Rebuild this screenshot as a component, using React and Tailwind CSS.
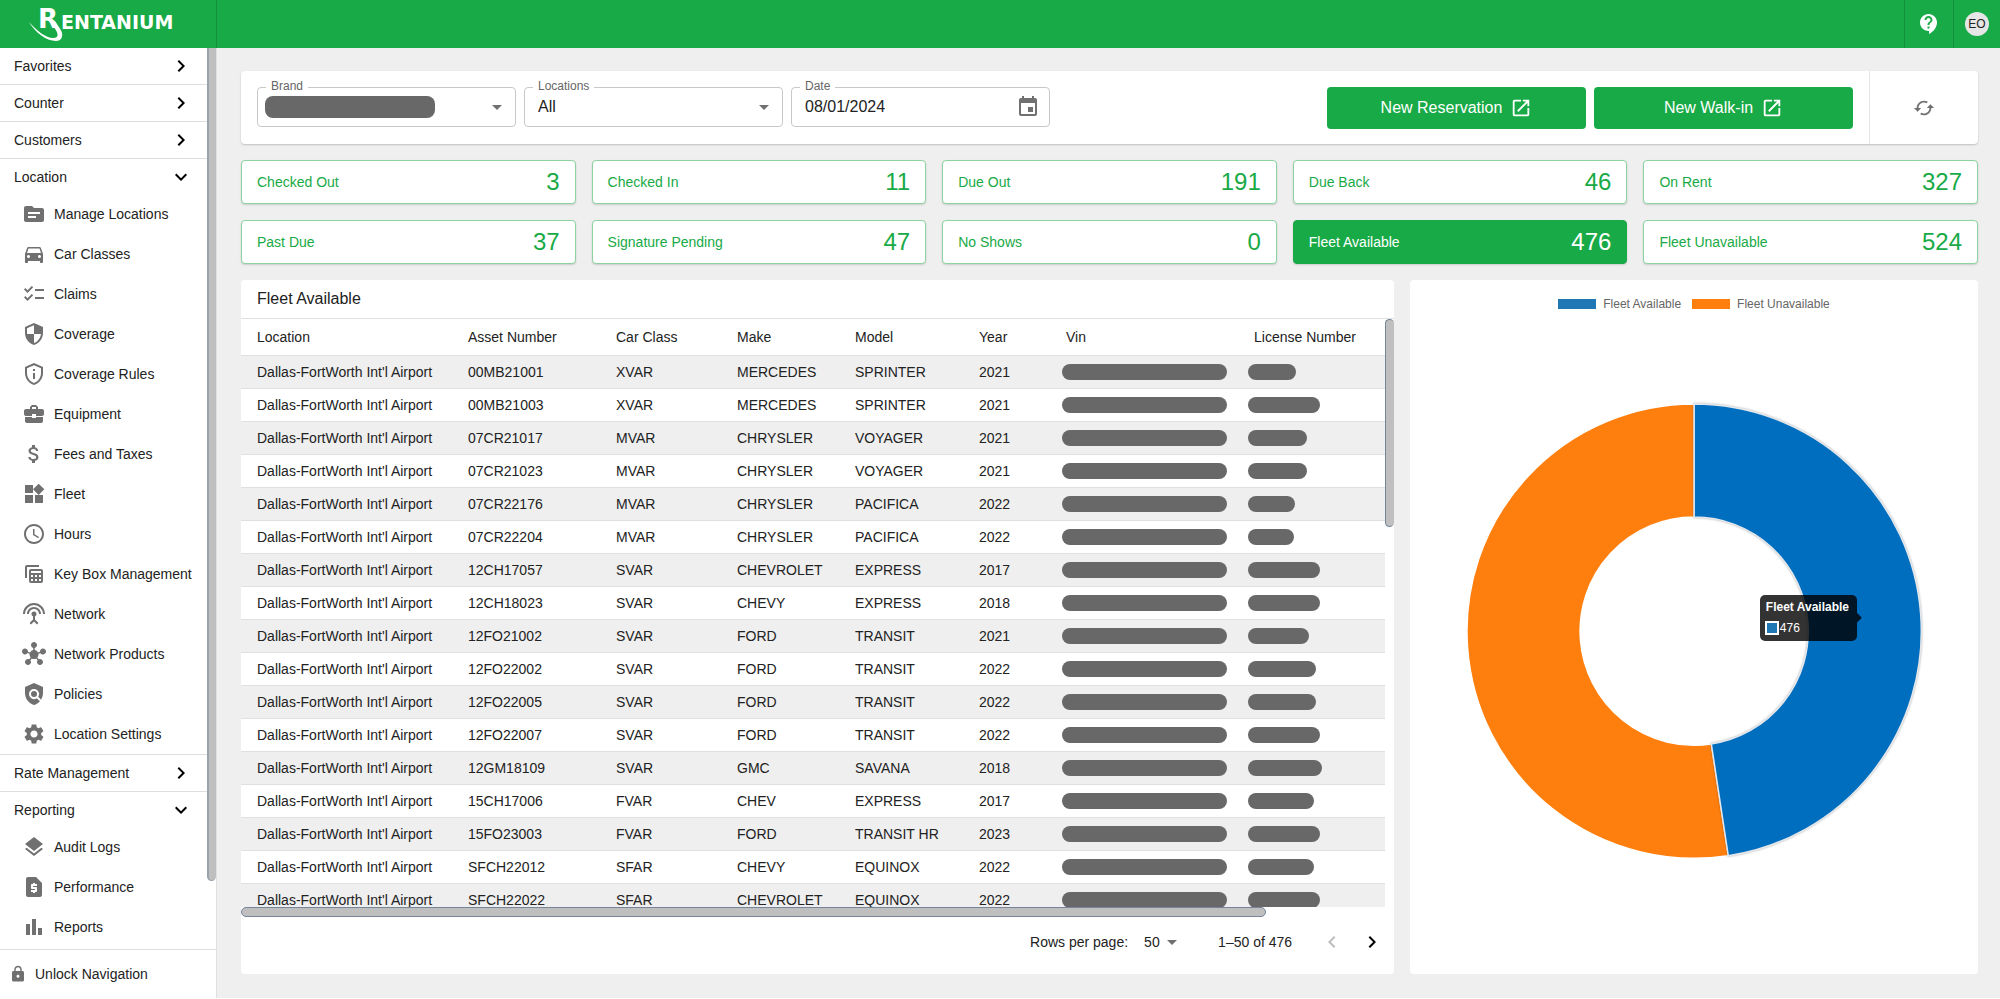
import React from "react";
import {
  MdArrowDropDown,
  MdAttachMoney,
  MdBusinessCenter,
  MdCached,
  MdChecklist,
  MdChevronLeft,
  MdChevronRight,
  MdContactSupport,
  MdDirectionsCar,
  MdEvent,
  MdExpandMore,
  MdHub,
  MdLayers,
  MdLock,
  MdOpenInNew,
  MdOutlinePrivacyTip,
  MdPolicy,
  MdRequestPage,
  MdSchedule,
  MdSecurity,
  MdSettings,
  MdSettingsInputAntenna,
  MdSource,
  MdWidgets,
} from "react-icons/md";

function KeyBoxIcon(props) {
  return (
    <svg viewBox="0 0 24 24" fill="currentColor" fillRule="evenodd" aria-hidden="true" {...props}>
      <path d="M17 5V3H5a2 2 0 0 0-2 2v11h2V5z" />
      <path d="M9 7h10a2 2 0 0 1 2 2v10a2 2 0 0 1-2 2H9a2 2 0 0 1-2-2V9a2 2 0 0 1 2-2zm0 2v2h10V9zm0 4v2h2v-2zm4 0v2h2v-2zm4 0v2h2v-2zm-8 4v2h2v-2zm4 0v2h2v-2zm4 0v2h2v-2z" />
    </svg>
  );
}

function BarsIcon(props) {
  return (
    <svg viewBox="0 0 24 24" fill="currentColor" aria-hidden="true" {...props}>
      <path d="M4 9h4v11H4zM16 13h4v7h-4zM10 4h4v16h-4z" />
    </svg>
  );
}

const sections = [
  { label: "Favorites" },
  { label: "Counter" },
  { label: "Customers" },
  {
    label: "Location",
    items: [
      ["Manage Locations", MdSource],
      ["Car Classes", MdDirectionsCar],
      ["Claims", MdChecklist],
      ["Coverage", MdSecurity],
      ["Coverage Rules", MdOutlinePrivacyTip],
      ["Equipment", MdBusinessCenter],
      ["Fees and Taxes", MdAttachMoney],
      ["Fleet", MdWidgets],
      ["Hours", MdSchedule],
      ["Key Box Management", KeyBoxIcon],
      ["Network", MdSettingsInputAntenna],
      ["Network Products", MdHub],
      ["Policies", MdPolicy],
      ["Location Settings", MdSettings],
    ],
  },
  { label: "Rate Management" },
  {
    label: "Reporting",
    last: true,
    items: [
      ["Audit Logs", MdLayers],
      ["Performance", MdRequestPage],
      ["Reports", BarsIcon],
    ],
  },
];

const stats = [
  ["Checked Out", 3],
  ["Checked In", 11],
  ["Due Out", 191],
  ["Due Back", 46],
  ["On Rent", 327],
  ["Past Due", 37],
  ["Signature Pending", 47],
  ["No Shows", 0],
  ["Fleet Available", 476],
  ["Fleet Unavailable", 524],
];

const columns = [
  ["Location", "w-[211px]"],
  ["Asset Number", "w-[148px]"],
  ["Car Class", "w-[121px]"],
  ["Make", "w-[118px]"],
  ["Model", "w-[124px]"],
  ["Year", "w-[87px]"],
  ["Vin", "w-[188px]"],
  ["License Number", "w-[148px]"],
];

const AIRPORT = "Dallas-FortWorth Int'l Airport";

// asset number, class, make, model, year, width of the masked license number
const vehicles = [
  ["00MB21001", "XVAR", "MERCEDES", "SPRINTER", "2021", 48],
  ["00MB21003", "XVAR", "MERCEDES", "SPRINTER", "2021", 72],
  ["07CR21017", "MVAR", "CHRYSLER", "VOYAGER", "2021", 59],
  ["07CR21023", "MVAR", "CHRYSLER", "VOYAGER", "2021", 59],
  ["07CR22176", "MVAR", "CHRYSLER", "PACIFICA", "2022", 47],
  ["07CR22204", "MVAR", "CHRYSLER", "PACIFICA", "2022", 46],
  ["12CH17057", "SVAR", "CHEVROLET", "EXPRESS", "2017", 72],
  ["12CH18023", "SVAR", "CHEVY", "EXPRESS", "2018", 72],
  ["12FO21002", "SVAR", "FORD", "TRANSIT", "2021", 61],
  ["12FO22002", "SVAR", "FORD", "TRANSIT", "2022", 68],
  ["12FO22005", "SVAR", "FORD", "TRANSIT", "2022", 68],
  ["12FO22007", "SVAR", "FORD", "TRANSIT", "2022", 72],
  ["12GM18109", "SVAR", "GMC", "SAVANA", "2018", 74],
  ["15CH17006", "FVAR", "CHEV", "EXPRESS", "2017", 66],
  ["15FO23003", "FVAR", "FORD", "TRANSIT HR", "2023", 72],
  ["SFCH22012", "SFAR", "CHEVY", "EQUINOX", "2022", 66],
  ["SFCH22022", "SFAR", "CHEVROLET", "EQUINOX", "2022", 72],
];

function Logo() {
  return (
    <svg width="160" height="48" viewBox="28 0 160 48" role="img" aria-label="Rentanium" fill="#fff">
      <text x="38" y="28" fontFamily="'DejaVu Sans', sans-serif" fontWeight="700" fontSize="26">R</text>
      <text x="61" y="29" fontFamily="'DejaVu Sans', sans-serif" fontWeight="700" fontSize="19">ENTANIUM</text>
      <path d="M29 22C37 31 46 38 53 38C56.500 38 58 36.500 57.500 34C57 31 54 27 50 22L55 21C58 26 61.500 30 62 33C63 37.500 60.500 41 56 41C46 41 35 32 29 22Z" />
    </svg>
  );
}

function Header() {
  return (
    <header className="flex h-12 shrink-0 items-stretch bg-[#18aa46] text-white">
      <div className="flex w-[217px] items-center border-r border-black/15 pl-7">
        <Logo />
      </div>
      <div className="flex-1" />
      <button type="button" aria-label="Help" className="flex w-[49px] items-center justify-center border-l border-black/15">
        <MdContactSupport className="size-6" />
      </button>
      <div className="flex w-[47px] items-center justify-center border-l border-black/15">
        <button type="button" className="flex size-6 items-center justify-center rounded-full bg-[#e6e6e6] text-xs text-[#222]">
          EO
        </button>
      </div>
    </header>
  );
}

function Sidebar() {
  return (
    <aside className="flex w-[217px] shrink-0 flex-col border-r border-[#e0e0e0] bg-white">
      <div className="flex min-h-0 flex-1">
        <nav className="min-w-0 flex-1 overflow-hidden">
          {sections.map((s) => (
            <div key={s.label} className={s.last ? "" : "border-b border-[#dedede]"}>
              <button
                type="button"
                aria-expanded={Boolean(s.items)}
                className={`flex w-full items-center justify-between pl-3.5 pr-3.5 ${s.items ? "h-[35px]" : "h-9"}`}
              >
                {s.label}
                {s.items ? <MdExpandMore className="size-6 text-black" /> : <MdChevronRight className="size-6 text-black" />}
              </button>
              {s.items && (
                <ul>
                  {s.items.map(([name, Icon]) => (
                    <li key={name}>
                      <a href="#" className="flex h-10 items-center gap-2 whitespace-nowrap pl-[22px]">
                        <Icon className="size-6 shrink-0 text-[#707070]" />
                        {name}
                      </a>
                    </li>
                  ))}
                </ul>
              )}
            </div>
          ))}
        </nav>
        <div className="w-[9px] shrink-0">
          <div className="h-[833px] max-h-full rounded-b-[5px] border-b border-l-2 border-[#98a3ad] bg-[#bfbfbf]" />
        </div>
      </div>
      <button type="button" className="flex h-[49px] shrink-0 items-center gap-2 border-t border-[#dedede] pl-[9px]">
        <MdLock className="size-[18px] text-[#707070]" />
        Unlock Navigation
      </button>
    </aside>
  );
}

function Field({ id, label, children }) {
  return (
    <div className="relative flex h-10 w-[259px] items-center rounded border border-[#c8c8c8]">
      <label htmlFor={id} className="absolute -top-2.5 left-2 bg-white px-[5px] text-xs leading-4 text-[#666]">
        {label}
      </label>
      {children}
    </div>
  );
}

function Filters() {
  return (
    <section className="flex shrink-0 rounded bg-white shadow-[0_1px_2px_rgba(0,0,0,0.2)]">
      <div className="flex flex-1 items-start gap-2 px-4 pb-[15px] pt-4">
        <Field id="brand" label="Brand">
          <select id="brand" className="h-full w-full appearance-none bg-transparent pl-[13px] text-base outline-none" defaultValue="">
            <option value="" />
          </select>
          <span className="pointer-events-none absolute left-[7px] top-2 h-[22px] w-[170px] rounded-lg bg-[#686868]" />
          <MdArrowDropDown className="pointer-events-none absolute right-[6px] size-6 text-[#707070]" />
        </Field>
        <Field id="locations" label="Locations">
          <select id="locations" className="h-full w-full appearance-none bg-transparent pl-[13px] text-base outline-none">
            <option>All</option>
          </select>
          <MdArrowDropDown className="pointer-events-none absolute right-[6px] size-6 text-[#707070]" />
        </Field>
        <Field id="date" label="Date">
          <input id="date" type="text" defaultValue="08/01/2024" className="h-full min-w-0 flex-1 bg-transparent pl-[13px] text-base outline-none" />
          <button type="button" aria-label="Choose date" className="mr-[9px]">
            <MdEvent className="size-6 text-[#707070]" />
          </button>
        </Field>
        <div className="flex-1" />
        {["New Reservation", "New Walk-in"].map((name) => (
          <button
            key={name}
            type="button"
            className="flex h-[42px] w-[259px] items-center justify-center gap-2 rounded bg-[#18aa46] text-base text-white"
          >
            {name}
            <MdOpenInNew className="size-[22px]" />
          </button>
        ))}
      </div>
      <button type="button" aria-label="Refresh" className="flex w-[109px] items-center justify-center border-l border-[#e4e4e4]">
        <MdCached className="size-[22px] text-[#707070]" />
      </button>
    </section>
  );
}

function Stats() {
  return (
    <section className="grid shrink-0 grid-cols-5 gap-4">
      {stats.map(([label, value]) => (
        <button
          key={label}
          type="button"
          className={`flex h-11 items-center justify-between rounded border px-[15px] shadow-[0_1px_2px_rgba(0,0,0,0.15)] ${
            value === 476 ? "border-[#18aa46] bg-[#18aa46] text-white" : "border-[#8bd4a2] bg-white text-[#18aa46]"
          }`}
        >
          <span>{label}</span>
          <span className="text-2xl">{value}</span>
        </button>
      ))}
    </section>
  );
}

function FleetTable() {
  return (
    <section className="flex min-h-0 min-w-0 flex-col overflow-hidden rounded bg-white">
      <h2 className="flex h-[39px] shrink-0 items-center border-b border-[#e0e0e0] px-4 text-base">Fleet Available</h2>
      <div className="flex min-h-0 flex-1">
        <div className="min-w-0 flex-1 overflow-hidden">
          <table className="w-full table-fixed border-separate border-spacing-0 text-left">
            <thead>
              <tr className="h-[37px]">
                {columns.map(([name, width]) => (
                  <th key={name} className={`border-b border-[#e0e0e0] pl-4 font-normal ${width}`}>
                    {name}
                  </th>
                ))}
              </tr>
            </thead>
            <tbody>
              {vehicles.map(([asset, ...rest]) => {
                const licenseWidth = rest[4];
                return (
                  <tr key={asset} className="h-[33px] whitespace-nowrap odd:bg-[#efefef]">
                    {[AIRPORT, asset, ...rest.slice(0, 4)].map((text, i) => (
                      <td key={i} className="border-b border-[#e0e0e0] pl-4">
                        {text}
                      </td>
                    ))}
                    <td className="border-b border-[#e0e0e0] pl-3">
                      <div className="h-4 w-[165px] rounded-full bg-[#686868]" />
                    </td>
                    <td className="border-b border-[#e0e0e0] pl-2.5">
                      <div className="h-4 rounded-full bg-[#686868]" style={{ width: licenseWidth }} />
                    </td>
                  </tr>
                );
              })}
            </tbody>
          </table>
        </div>
        <div className="w-[9px] shrink-0">
          <div className="h-[208px] rounded-[5px] border border-r-0 border-[#75869a] bg-[#bfbfbf]" />
        </div>
      </div>
      <div className="h-2.5 w-8/9 shrink-0 rounded-[5px] border border-[#75869a] bg-[#bfbfbf]" />
      <div className="flex h-[57px] shrink-0 items-center justify-end pb-[7px] pr-2.5">
        <label htmlFor="rows">Rows per page:</label>
        <div className="relative ml-4 mr-[34px] flex items-center">
          <select id="rows" className="w-10 appearance-none bg-transparent outline-none">
            <option>50</option>
          </select>
          <MdArrowDropDown className="pointer-events-none absolute left-4 size-6 text-[#707070]" />
        </div>
        <span>1–50 of 476</span>
        <button type="button" aria-label="Previous page" disabled className="ml-7 text-[#bdbdbd]">
          <MdChevronLeft className="size-6" />
        </button>
        <button type="button" aria-label="Next page" className="ml-4 text-black">
          <MdChevronRight className="size-6" />
        </button>
      </div>
    </section>
  );
}

const OUTER = 227;
const INNER = 114;

function point(radius, share) {
  const a = share * 2 * Math.PI;
  return `${(radius * Math.sin(a)).toFixed(2)} ${(-radius * Math.cos(a)).toFixed(2)}`;
}

function slice(from, to) {
  const large = to - from > 0.5 ? 1 : 0;
  return `M${point(OUTER, from)}A${OUTER} ${OUTER} 0 ${large} 1 ${point(OUTER, to)}L${point(INNER, to)}A${INNER} ${INNER} 0 ${large} 0 ${point(INNER, from)}Z`;
}

function FleetChart() {
  return (
    <section className="flex min-h-0 min-w-0 flex-col rounded bg-white pb-6 pt-4">
      <div className="flex justify-center gap-[11px] text-xs leading-4 text-[#666]">
        <span className="flex items-center gap-[7px]">
          <span className="h-2.5 w-[38px] bg-[#1f77b4]" />
          Fleet Available
        </span>
        <span className="flex items-center gap-[7px]">
          <span className="h-2.5 w-[38px] bg-[#ff7f0e]" />
          Fleet Unavailable
        </span>
      </div>
      <div className="flex min-h-0 flex-1 items-center justify-center">
        <div className="relative w-4/5">
          <svg viewBox="-227 -227 454 454" className="block w-full overflow-visible" role="img" aria-label="Fleet availability">
            <path d={slice(0.476, 1)} fill="#ff7f0e" stroke="#fff" strokeWidth="1.5" />
            <path
              d={slice(0, 0.476)}
              fill="#006ebf"
              stroke="#e4e8ec"
              strokeWidth="1.5"
              className="drop-shadow-[0_0_1px_rgba(0,0,0,0.3)]"
            />
          </svg>
          <div className="absolute left-[293px] top-[191px] w-[97px] rounded-[5px] bg-black/80 px-1.5 pb-[5px] pt-1 text-xs text-white">
            <div className="whitespace-nowrap font-bold leading-4">Fleet Available</div>
            <div className="mt-[5px] flex h-4 items-center gap-px leading-4">
              <span className="-ml-px size-3.5 border-2 border-white bg-[#1f77b4]" />
              476
            </div>
            <span className="absolute left-full top-[18px] h-2.5 w-[5px] bg-black/80 [clip-path:polygon(0_0,100%_50%,0_100%)]" />
          </div>
        </div>
      </div>
    </section>
  );
}

export default function App() {
  return (
    <div className="flex h-screen flex-col border-b border-white bg-[#efefef] font-['Liberation_Sans',Arial,sans-serif] text-sm text-[#222]">
      <Header />
      <div className="flex min-h-0 flex-1">
        <Sidebar />
        <main className="flex min-w-0 flex-1 flex-col gap-4 pb-6 pl-6 pr-[22px] pt-[23px]">
          <Filters />
          <Stats />
          <div className="grid min-h-0 flex-1 grid-cols-[67fr_33fr] grid-rows-[minmax(0,1fr)] gap-4">
            <FleetTable />
            <FleetChart />
          </div>
        </main>
      </div>
    </div>
  );
}
